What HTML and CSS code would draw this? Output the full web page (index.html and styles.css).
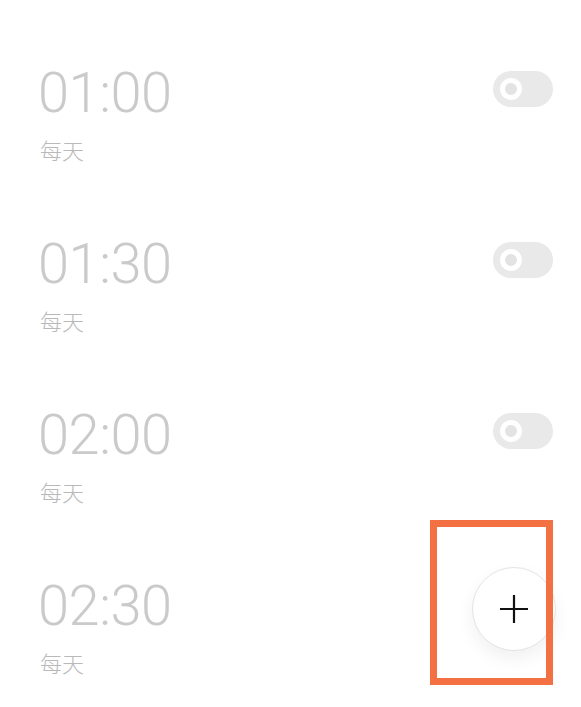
FILE: index.html
```html
<!DOCTYPE html>
<html lang="zh">
<head>
<meta charset="utf-8">
<title>闹钟</title>
<link rel="stylesheet" href="styles.css">
</head>
<body>
<main class="list">
  <div class="row">
    <div class="info">
      <div class="time">01:00</div>
      <div class="label">每天</div>
    </div>
    <div class="toggle"><span class="knob"></span></div>
  </div>
  <div class="row">
    <div class="info">
      <div class="time">01:30</div>
      <div class="label">每天</div>
    </div>
    <div class="toggle"><span class="knob"></span></div>
  </div>
  <div class="row">
    <div class="info">
      <div class="time">02:00</div>
      <div class="label">每天</div>
    </div>
    <div class="toggle"><span class="knob"></span></div>
  </div>
  <div class="row">
    <div class="info">
      <div class="time">02:30</div>
      <div class="label">每天</div>
    </div>
    <div class="toggle"><span class="knob"></span></div>
  </div>
</main>
<button class="fab" aria-label="添加">
  <svg width="28" height="28" viewBox="0 0 28 28"><path d="M14 0V28M0 14H28" stroke="#111" stroke-width="2.2" fill="none"/></svg>
</button>
<div class="highlight"></div>
</body>
</html>
```

FILE: styles.css
```css
html, body {
  margin: 0;
  padding: 0;
  background: #ffffff;
}
body {
  width: 581px;
  height: 707px;
  overflow: hidden;
  position: relative;
  font-family: Roboto, "Noto Sans", "Noto Sans CJK SC", sans-serif;
}
.list {
  padding: 65px 28px 0 38px;
}
.row {
  display: flex;
  justify-content: space-between;
  align-items: flex-start;
  padding-bottom: 73px;
}
.row:last-child {
  padding-bottom: 0;
}
.info {
  display: flex;
  flex-direction: column;
}
.time {
  font-family: Roboto, "Noto Sans", sans-serif;
  font-weight: 300;
  font-size: 56px;
  line-height: 56px;
  color: #cacaca;
  letter-spacing: -0.5px;
}
.label {
  font-family: "Noto Sans CJK SC", sans-serif;
  font-weight: 300;
  font-size: 22px;
  line-height: 28px;
  margin-top: 14px;
  margin-left: 2px;
  color: #b9b9b9;
}
.toggle {
  position: relative;
  width: 60px;
  height: 36px;
  margin-top: 6px;
  border-radius: 18px;
  background: #e9e9e9;
}
.knob {
  position: absolute;
  left: 7px;
  top: 7px;
  width: 12px;
  height: 12px;
  border: 5px solid #ffffff;
  border-radius: 50%;
  background: #e3e3e3;
}
.fab {
  position: absolute;
  left: 472px;
  top: 567px;
  width: 84px;
  height: 84px;
  padding: 0;
  border-radius: 50%;
  border: 1px solid #e4e4e4;
  background: #ffffff;
  box-shadow: 0 8px 18px rgba(0, 0, 0, 0.06);
  display: flex;
  align-items: center;
  justify-content: center;
}
.highlight {
  position: absolute;
  left: 430px;
  top: 520px;
  width: 109px;
  height: 151px;
  border: 7px solid #f37043;
  pointer-events: none;
}
```
